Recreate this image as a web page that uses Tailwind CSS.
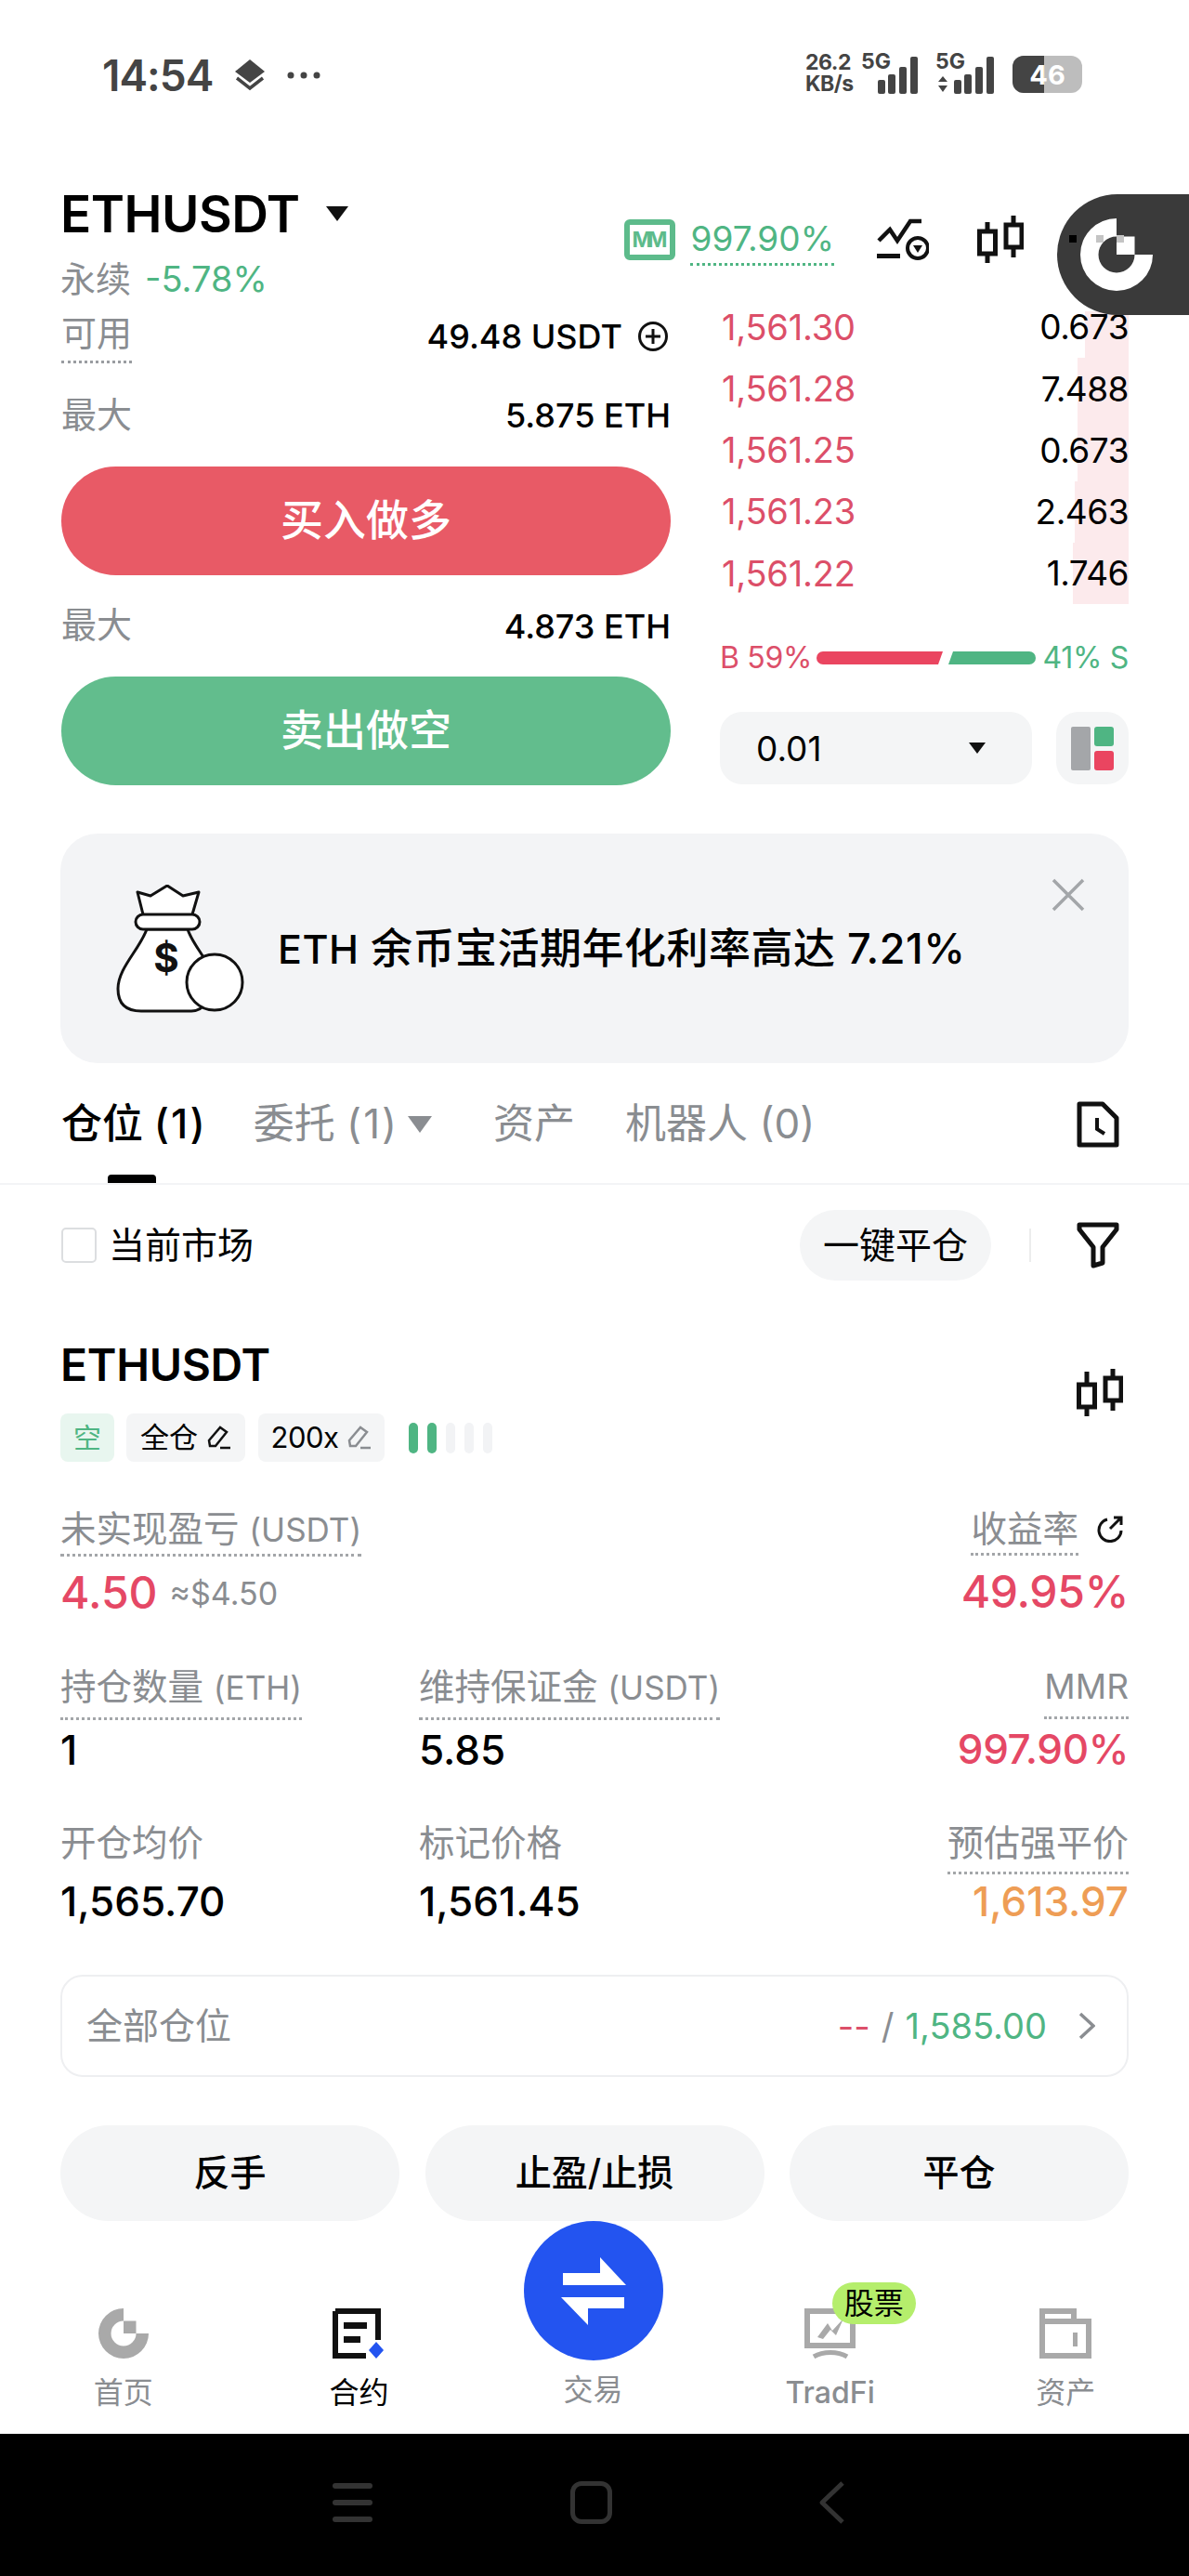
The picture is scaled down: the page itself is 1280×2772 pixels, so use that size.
<!DOCTYPE html>
<html lang="zh-CN">
<head>
    <meta charset="UTF-8">
    <meta name="viewport" content="width=device-width, initial-scale=1.0">
    <title>ETHUSDT</title>
    <script src="https://cdn.jsdelivr.net/npm/@tailwindcss/browser@4"></script>
</head>
<body class="bg-white">
<div class="relative w-[1280px] h-[2772px] overflow-hidden flex flex-col text-black font-['Inter','Noto_Sans_CJK_SC',sans-serif]">

    <!-- status bar -->
    <div class="h-[160px] shrink-0 flex items-start justify-between pl-[110px] pr-[115px] pt-[56px]">
        <div class="flex items-center h-[50px] text-[#444]">
            <span class="text-[46px] leading-[50px] font-semibold tracking-[-1px]">14:54</span>
            <svg class="ml-[24px] w-[32px] h-[34px]" viewBox="0 0 32 34"><path d="M16 0 32 13 16 25 0 13Z" fill="#444"/><path d="M2 20 16 31 30 20" fill="none" stroke="#444" stroke-width="3.5"/></svg>
            <svg class="ml-[24px] w-[36px] h-[8px]" viewBox="0 0 36 8"><circle cx="4" cy="4" r="3.5" fill="#444"/><circle cx="18" cy="4" r="3.5" fill="#444"/><circle cx="32" cy="4" r="3.5" fill="#444"/></svg>
        </div>
        <div class="flex items-start text-[#444]">
            <div class="flex flex-col items-start font-bold text-[23px] leading-[23px] w-[56px] tracking-[-0.5px]"><span>26.2</span><span>KB/s</span></div>
            <div class="relative ml-[4px] w-[68px] h-[46px]">
                <span class="absolute left-0 top-0 text-[23px] leading-[20px] font-bold">5G</span>
                <svg class="w-[68px] h-[46px]" viewBox="0 0 68 46"><rect x="18" y="30" width="8" height="15" rx="2" fill="#444"/><rect x="29" y="24" width="8" height="21" rx="2" fill="#444"/><rect x="41" y="16" width="8" height="29" rx="2" fill="#444"/><rect x="53" y="5" width="8" height="40" rx="2" fill="#444"/></svg>
            </div>
            <div class="relative ml-[12px] w-[70px] h-[46px]">
                <span class="absolute left-0 top-0 text-[23px] leading-[20px] font-bold">5G</span>
                <svg class="w-[70px] h-[46px]" viewBox="0 0 70 46"><path d="M3 32 8 26 13 32ZM3 36 8 43 13 36Z" fill="#444"/><rect x="20" y="30" width="8" height="15" rx="2" fill="#444"/><rect x="31" y="24" width="8" height="21" rx="2" fill="#444"/><rect x="43" y="16" width="8" height="29" rx="2" fill="#444"/><rect x="55" y="5" width="8" height="40" rx="2" fill="#444"/></svg>
            </div>
            <div class="relative ml-[13px] mt-[4px] w-[75px] h-[40px] rounded-[12px] bg-[#bdbdbd] overflow-hidden flex items-center justify-center">
                <div class="absolute left-0 top-0 h-full w-[34px] bg-[#444]"></div>
                <span class="relative text-[29px] font-bold text-white leading-none">46</span>
            </div>
        </div>
    </div>

    <!-- header -->
    <div class="h-[170px] shrink-0 flex justify-between pl-[65px]">
        <div class="flex flex-col">
            <div class="flex items-center h-[50px] mt-[45px]">
                <span class="text-[55px] leading-[50px] font-semibold tracking-[-0.5px]">ETHUSDT</span>
                <svg class="ml-[28px] w-[24px] h-[16px]" viewBox="0 0 24 16"><path d="M0 0H24L12 16Z" fill="#111"/></svg>
            </div>
            <div class="flex items-center mt-[23px] h-[44px]">
                <span class="text-[38px] text-[#8a8d91]">永续</span>
                <span class="ml-[15px] text-[38px] text-[#4fb583]">-5.78%</span>
            </div>
        </div>
        <div class="flex items-center h-[54px] mt-[71px] pr-[178px]">
            <svg class="w-[55px] h-[44px]" viewBox="0 0 55 44"><rect x="3" y="3" width="49" height="38" rx="3" fill="none" stroke="#5dbb8b" stroke-width="6"/><text x="27.500" y="30" text-anchor="middle" font-size="23" font-weight="700" fill="#5dbb8b" textLength="38">MM</text></svg>
            <span class="ml-[16px] text-[37px] leading-[52px] text-[#4fb583] border-b-[3px] border-dotted border-[#4fb583]">997.90%</span>
            <svg class="ml-[46px] w-[56px] h-[46px]" viewBox="0 0 56 46"><path d="M2 24 14 12 22 24 36 3H48" fill="none" stroke="#111" stroke-width="4.500"/><rect x="0" y="38" width="25" height="5" fill="#111"/><circle cx="44" cy="32" r="11" fill="none" stroke="#111" stroke-width="4"/><path d="M39 29H49L44 37Z" fill="#111"/></svg>
            <svg class="ml-[52px] w-[50px] h-[54px]" viewBox="0 0 50 54"><path d="M11 8V52M39 1V46" stroke="#111" stroke-width="5"/><rect x="2.500" y="18" width="17" height="24" fill="#fff" stroke="#111" stroke-width="5"/><rect x="31" y="11" width="17" height="24" fill="#fff" stroke="#111" stroke-width="5"/></svg>
        </div>
    </div>

    <!-- trade panel -->
    <div class="shrink-0 h-[515px] flex pl-[66px] pr-[65px]">
        <div class="w-[656px] shrink-0 flex flex-col">
            <div class="h-[62px] flex items-start justify-between">
                <span class="text-[38px] leading-[47px] h-[61px] pt-[5px] text-[#8a8d91] border-b-[3px] border-dotted border-[#9a9da1] box-border">可用</span>
                <div class="flex items-center h-[64px] pr-[2px]">
                    <span class="text-[36px] font-medium">49.48 USDT</span>
                    <svg class="ml-[16px] w-[34px] h-[34px]" viewBox="0 0 34 34"><circle cx="17" cy="17" r="14.500" fill="none" stroke="#111" stroke-width="3"/><path d="M17 9V25M9 17H25" stroke="#111" stroke-width="3"/></svg>
                </div>
            </div>
            <div class="h-[110px] flex items-center justify-between">
                <span class="text-[38px] mt-[-2px] text-[#8a8d91]">最大</span>
                <span class="text-[36px] font-medium">5.875 ETH</span>
            </div>
            <div class="h-[117px] rounded-full bg-[#e85a66] flex items-center justify-center text-white text-[46px] font-medium pb-[2px]">买入做多</div>
            <div class="h-[109px] flex items-center justify-between">
                <span class="text-[38px] mt-[-2px] text-[#8a8d91]">最大</span>
                <span class="text-[36px] font-medium">4.873 ETH</span>
            </div>
            <div class="h-[117px] rounded-full bg-[#62bd8d] flex items-center justify-center text-white text-[46px] font-medium pb-[2px]">卖出做空</div>
        </div>
        <div class="ml-[53px] flex-1 flex flex-col mt-[-11px]">
            <div class="relative h-[66.25px] flex items-center justify-between"><div class="absolute right-0 top-[16px] bottom-0 w-[47px] bg-[#fceaec]"></div><span class="relative pl-[2px] text-[38px] text-[#dc4f69] tracking-[-0.2px]">1,561.30</span><span class="relative text-[37px] tracking-[-0.5px]">0.673</span></div>
            <div class="relative h-[66.25px] flex items-center justify-between"><div class="absolute right-0 top-0 bottom-0 w-[55px] bg-[#fceaec]"></div><span class="relative pl-[2px] text-[38px] text-[#dc4f69] tracking-[-0.2px]">1,561.28</span><span class="relative text-[37px] tracking-[-0.5px]">7.488</span></div>
            <div class="relative h-[66.25px] flex items-center justify-between"><div class="absolute right-0 top-0 bottom-0 w-[55px] bg-[#fceaec]"></div><span class="relative pl-[2px] text-[38px] text-[#dc4f69] tracking-[-0.2px]">1,561.25</span><span class="relative text-[37px] tracking-[-0.5px]">0.673</span></div>
            <div class="relative h-[66.25px] flex items-center justify-between"><div class="absolute right-0 top-0 bottom-0 w-[58px] bg-[#fceaec]"></div><span class="relative pl-[2px] text-[38px] text-[#dc4f69] tracking-[-0.2px]">1,561.23</span><span class="relative text-[37px] tracking-[-0.5px]">2.463</span></div>
            <div class="relative h-[66.25px] flex items-center justify-between"><div class="absolute right-0 top-0 bottom-0 w-[60px] bg-[#fceaec]"></div><span class="relative pl-[2px] text-[38px] text-[#dc4f69] tracking-[-0.2px]">1,561.22</span><span class="relative text-[37px] tracking-[-0.5px]">1.746</span></div>

            <div class="mt-[38px] h-[40px] flex items-center justify-between text-[32px] tracking-[-0.3px]">
                <span class="text-[#dc4f69]">B 59%</span>
                <svg class="w-[236px] h-[14px] mr-[2px]" viewBox="0 0 236 14"><path d="M7 0H136L131 14H7A7 7 0 0 1 7 0Z" fill="#ea4560"/><path d="M147 0H229A7 7 0 0 1 229 14H142Z" fill="#4fb583"/></svg>
                <span class="text-[#4fb583]">41% S</span>
            </div>
            <div class="mt-[38px] flex justify-between h-[78px]">
                <div class="w-[336px] rounded-[24px] bg-[#f4f5f6] flex items-center justify-between pl-[39px] pr-[50px]">
                    <span class="text-[37px]">0.01</span>
                    <svg class="w-[18px] h-[12px]" viewBox="0 0 18 12"><path d="M0 0H18L9 12Z" fill="#111"/></svg>
                </div>
                <div class="w-[78px] rounded-[24px] bg-[#f4f5f6] flex items-center justify-center">
                    <svg class="w-[46px] h-[47px]" viewBox="0 0 46 47"><rect width="21" height="47" rx="2" fill="#a4a6a9"/><rect x="25" width="21" height="21" rx="3" fill="#4fb583"/><rect x="25" y="26" width="21" height="21" rx="3" fill="#ea4560"/></svg>
                </div>
            </div>
        </div>
    </div>

    <!-- banner -->
    <div class="relative shrink-0 mt-[52px] mx-[65px] h-[247px] rounded-[40px] bg-[#f3f4f6] flex items-start pl-[59px] pt-[55px]">
        <svg class="w-[140px] h-[138px] shrink-0" viewBox="0 0 140 138">
            <path d="M30 32 24 8 38 12 56 1 73 12 90 8 83 32" fill="#fff" stroke="#111" stroke-width="3" stroke-linejoin="round"/>
            <path d="M34 48C26 70 3 90 3 112 3 130 14 136 28 136H82C96 136 106 120 106 100 100 80 84 66 78 48Z" fill="#fff" stroke="#111" stroke-width="3"/>
            <rect x="22" y="32" width="69" height="16" rx="8" fill="#fff" stroke="#111" stroke-width="3"/>
            <text x="55" y="94" text-anchor="middle" font-size="42" font-weight="700" fill="#111">$</text>
            <circle cx="107" cy="105" r="30" fill="#fff" stroke="#111" stroke-width="3"/>
        </svg>
        <span class="ml-[35px] mt-[43px] text-[45px] leading-[52px] font-medium tracking-[0.5px]"><span class="text-[43px]">ETH</span> 余币宝活期年化利率高达 7.21%</span>
        <svg class="absolute right-[47px] top-[48px] w-[36px] h-[36px]" viewBox="0 0 36 36"><path d="M2 2 34 34M34 2 2 34" stroke="#a3a6a9" stroke-width="3.500"/></svg>
    </div>

    <!-- tabs -->
    <div class="relative shrink-0 h-[131px] border-b-[2px] border-[#f3f4f6] flex items-start pl-[66px] pr-[75px] pt-[38px]">
        <span class="text-[44px] leading-[54px] font-medium">仓位 <span class="tracking-[2px]">(1)</span></span>
        <span class="ml-[50px] text-[44px] leading-[54px] text-[#8a8d91]">委托 <span class="tracking-[2px]">(1)</span></span>
        <svg class="ml-[10px] mt-[19px] w-[26px] h-[18px]" viewBox="0 0 26 18"><path d="M0 0H26L13 18Z" fill="#8a8d91"/></svg>
        <span class="ml-[66px] text-[44px] leading-[54px] text-[#8a8d91]">资产</span>
        <span class="ml-[54px] text-[44px] leading-[54px] text-[#8a8d91]">机器人 (0)</span>
        <svg class="ml-auto mt-[3px] w-[46px] h-[50px]" viewBox="0 0 46 50"><path d="M3 3H28L43 18V47H3Z" fill="none" stroke="#111" stroke-width="5" stroke-linejoin="round"/><path d="M22 18V30L30 35" fill="none" stroke="#111" stroke-width="4"/></svg>
        <div class="absolute left-[116px] bottom-0 w-[52px] h-[9px] bg-black rounded-t-[4px]"></div>
    </div>

    <!-- market filter -->
    <div class="shrink-0 h-[130px] flex items-center pl-[66px] pr-[75px]">
        <div class="w-[38px] h-[38px] rounded-[5px] border-[2px] border-[#dcdee0]"></div>
        <span class="ml-[13px] text-[39px]">当前市场</span>
        <div class="ml-auto w-[206px] h-[76px] rounded-full bg-[#f4f5f6] flex items-center justify-center text-[39px]">一键平仓</div>
        <div class="ml-[41px] w-[2px] h-[36px] bg-[#eceded]"></div>
        <svg class="ml-[49px] w-[46px] h-[50px]" viewBox="0 0 46 50"><path d="M3 3H43V8L28 27V44L18 47V27L3 8Z" fill="none" stroke="#111" stroke-width="5" stroke-linejoin="round"/></svg>
    </div>

    <!-- position -->
    <div class="shrink-0 px-[65px] flex flex-col">
        <div class="flex items-center justify-between mt-[45px]">
            <div class="flex flex-col">
                <span class="text-[48px] leading-[38px] font-semibold tracking-[-0.3px]">ETHUSDT</span>
                <div class="flex items-center mt-[33px] h-[52px]">
                    <span class="w-[58px] h-[52px] rounded-[8px] bg-[#e8f6ef] text-[#4fb583] text-[30px] flex items-center justify-center">空</span>
                    <span class="ml-[13px] w-[128px] h-[52px] rounded-[8px] bg-[#f4f5f6] text-[31px] flex items-center justify-center gap-[10px]">全仓
                        <svg class="w-[26px] h-[28px]" viewBox="0 0 26 28"><path d="M2 17 14 3 21 8 9 23H3Z" fill="none" stroke="#111" stroke-width="2.500"/><path d="M14 25H25" stroke="#111" stroke-width="2.500"/></svg>
                    </span>
                    <span class="ml-[14px] w-[136px] h-[52px] rounded-[8px] bg-[#f4f5f6] text-[31px] tracking-[-0.5px] flex items-center justify-center gap-[10px]">200x
                        <svg class="w-[26px] h-[28px]" viewBox="0 0 26 28"><path d="M2 17 14 3 21 8 9 23H3Z" fill="none" stroke="#8a8d91" stroke-width="2.500"/><path d="M14 25H25" stroke="#8a8d91" stroke-width="2.500"/></svg>
                    </span>
                    <div class="ml-[26px] flex gap-[10px]">
                        <div class="w-[10px] h-[33px] rounded-full bg-[#4fb583]"></div>
                        <div class="w-[10px] h-[33px] rounded-full bg-[#4fb583]"></div>
                        <div class="w-[10px] h-[33px] rounded-full bg-[#f2f3f5]"></div>
                        <div class="w-[10px] h-[33px] rounded-full bg-[#f2f3f5]"></div>
                        <div class="w-[10px] h-[33px] rounded-full bg-[#f2f3f5]"></div>
                    </div>
                </div>
            </div>
            <svg class="mr-[6px] mb-[26px] w-[50px] h-[54px]" viewBox="0 0 50 54"><path d="M11 4V52M39 1V46" stroke="#111" stroke-width="5"/><rect x="2.500" y="18" width="17" height="24" fill="#fff" stroke="#111" stroke-width="5"/><rect x="31" y="11" width="17" height="24" fill="#fff" stroke="#111" stroke-width="5"/></svg>
        </div>

        <!-- stats -->
        <div class="flex justify-between mt-[50px]">
            <div class="flex flex-col items-start">
                <span class="text-[38.5px] leading-[44px] pb-[4px] text-[#8a8d91] border-b-[3px] border-dotted border-[#a3a6a9]">未实现盈亏 <span class="text-[35px]">(USDT)</span></span>
                <div class="h-[78px] flex items-center"><span class="text-[48px] font-medium text-[#e54865]">4.50</span><span class="ml-[13px] text-[34px] text-[#8a8d91]">≈$4.50</span></div>
            </div>
            <div class="flex flex-col items-end">
                <div class="flex items-start">
                    <span class="text-[38.5px] leading-[44px] pb-[4px] text-[#8a8d91] border-b-[3px] border-dotted border-[#a3a6a9]">收益率</span>
                    <svg class="ml-[19px] mt-[7px] mr-[5px] w-[30px] h-[30px]" viewBox="0 0 30 30"><path d="M12 5A12 12 0 1 0 27 17" fill="none" stroke="#111" stroke-width="3"/><path d="M15 15 27 3M19 3H27V11" fill="none" stroke="#111" stroke-width="3"/></svg>
                </div>
                <div class="h-[78px] flex items-center"><span class="text-[48px] font-medium text-[#e54865] tracking-[-0.3px]">49.95%</span></div>
            </div>
        </div>
        <div class="flex mt-[40px]">
            <div class="w-[386px] flex flex-col items-start">
                <span class="text-[38.5px] leading-[44px] pb-[10px] text-[#8a8d91] border-b-[3px] border-dotted border-[#a3a6a9]">持仓数量 <span class="text-[35px]">(ETH)</span></span>
                <div class="h-[64px] flex items-center text-[44px] font-medium">1</div>
            </div>
            <div class="flex flex-col items-start">
                <span class="text-[38.5px] leading-[44px] pb-[10px] text-[#8a8d91] border-b-[3px] border-dotted border-[#a3a6a9]">维持保证金 <span class="text-[35px]">(USDT)</span></span>
                <div class="h-[64px] flex items-center text-[44px] font-medium">5.85</div>
            </div>
            <div class="ml-auto flex flex-col items-end">
                <span class="text-[37px] leading-[44px] pb-[10px] text-[#8a8d91] border-b-[3px] border-dotted border-[#a3a6a9]">MMR</span>
                <div class="h-[64px] flex items-center text-[44px] font-medium text-[#e54865] tracking-[-0.4px]">997.90%</div>
            </div>
        </div>
        <div class="flex mt-[46px]">
            <div class="w-[386px] flex flex-col items-start">
                <span class="text-[38.5px] leading-[44px] pb-[12px] text-[#8a8d91]">开仓均价</span>
                <div class="h-[58px] flex items-center text-[44px] font-medium">1,565.70</div>
            </div>
            <div class="flex flex-col items-start">
                <span class="text-[38.5px] leading-[44px] pb-[12px] text-[#8a8d91]">标记价格</span>
                <div class="h-[58px] flex items-center text-[44px] font-medium">1,561.45</div>
            </div>
            <div class="ml-auto flex flex-col items-end">
                <span class="text-[39px] leading-[44px] pb-[9px] text-[#8a8d91] border-b-[3px] border-dotted border-[#a3a6a9]">预估强平价</span>
                <div class="h-[58px] flex items-center text-[44px] font-medium text-[#ee9d55]">1,613.97</div>
            </div>
        </div>

        <!-- all positions -->
        <div class="mt-[50px] h-[110px] rounded-[24px] border-[2px] border-[#eeeff1] flex items-center pl-[26px] pr-[34px]">
            <span class="text-[39px] text-[#8a8d91]">全部仓位</span>
            <span class="ml-auto text-[38px] text-[#dc4f69]">--</span>
            <span class="ml-[12px] text-[38px] text-[#8a8d91]">/</span>
            <span class="ml-[12px] text-[38px] text-[#4fb583]">1,585.00</span>
            <svg class="ml-[34px] w-[18px] h-[30px]" viewBox="0 0 18 30"><path d="M2 2 16 15 2 28" fill="none" stroke="#8a8d91" stroke-width="3.500"/></svg>
        </div>

        <!-- actions -->
        <div class="mt-[52px] h-[103px] flex justify-between">
            <div class="w-[365px] rounded-full bg-[#f4f5f6] flex items-center justify-center text-[39px] font-medium">反手</div>
            <div class="w-[365px] rounded-full bg-[#f4f5f6] flex items-center justify-center text-[39px] font-medium">止盈/止损</div>
            <div class="w-[365px] rounded-full bg-[#f4f5f6] flex items-center justify-center text-[39px] font-medium">平仓</div>
        </div>
    </div>

    <!-- bottom nav -->
    <div class="relative shrink-0 h-[229px] grid grid-cols-5 px-[6px] pt-[94px]">
        <div class="flex flex-col items-center">
            <svg class="w-[56px] h-[54px]" viewBox="0 0 80 80"><path d="M40 0A40 40 0 1 0 80 40H60A20 20 0 1 1 40 20Z" fill="#a9a9a9"/><rect x="40" y="20" width="20" height="20" fill="#a9a9a9"/></svg>
            <span class="mt-[17px] text-[32px] leading-[40px] text-[#8a8d91]">首页</span>
        </div>
        <div class="flex flex-col items-center">
            <svg class="w-[56px] h-[54px]" viewBox="0 0 56 54"><path d="M3 3H49V34M36 51H3V3" fill="none" stroke="#111" stroke-width="6"/><rect x="12" y="15" width="25" height="7" fill="#111"/><rect x="12" y="30" width="18" height="7" fill="#111"/><path d="M47 36 55 45 47 54 39 45Z" fill="#2354f0"/></svg>
            <span class="mt-[17px] text-[32px] leading-[40px] text-black">合约</span>
        </div>
        <div class="flex flex-col items-center justify-end pb-[27px]">
            <span class="text-[32px] leading-[40px] text-[#8a8d91] mr-[3px]">交易</span>
        </div>
        <div class="relative flex flex-col items-center">
            <svg class="w-[56px] h-[54px]" viewBox="0 0 56 54"><path d="M3 3H52V40H3Z" fill="none" stroke="#a9a9a9" stroke-width="6"/><path d="M14 31 25 16 30 24 42 11 34 29 28 23 20 33Z" fill="#a9a9a9"/><path d="M10 52C20 46 36 46 46 52" fill="none" stroke="#a9a9a9" stroke-width="5"/></svg>
            <span class="mt-[17px] text-[32px] leading-[40px] text-[#8a8d91] font-medium">TradFi</span>
            <div class="absolute left-[129px] top-[-28px] w-[90px] h-[45px] rounded-full bg-[#b5ee6c] flex items-center justify-center text-[32px] text-black">股票</div>
        </div>
        <div class="flex flex-col items-center">
            <svg class="w-[56px] h-[54px]" viewBox="0 0 56 54"><path d="M3 51V3H37V14H53V51ZM3 14H37" fill="none" stroke="#a9a9a9" stroke-width="6"/><rect x="36" y="26" width="5" height="15" fill="#a9a9a9"/></svg>
            <span class="mt-[17px] text-[32px] leading-[40px] text-[#8a8d91]">资产</span>
        </div>
        <div class="absolute left-[564px] top-0 w-[150px] h-[150px] rounded-full bg-[#2354f0] flex items-center justify-center">
            <svg class="w-[70px] h-[73px]" viewBox="0 0 70 73"><path d="M2 17H42V0L70 30H2ZM0 43H68V55H29V73Z" fill="#fff"/></svg>
        </div>
    </div>

    <!-- android nav -->
    <div class="shrink-0 flex-1 bg-black flex items-center justify-center pr-[14px] pb-[6px]">
        <div class="flex flex-col gap-[12px]">
            <div class="w-[43px] h-[6px] rounded-full bg-[#333]"></div>
            <div class="w-[43px] h-[6px] rounded-full bg-[#333]"></div>
            <div class="w-[43px] h-[6px] rounded-full bg-[#333]"></div>
        </div>
        <div class="ml-[213px] w-[45px] h-[46px] rounded-[12px] border-[5px] border-[#333]"></div>
        <svg class="ml-[222px] w-[28px] h-[46px]" viewBox="0 0 28 46"><path d="M26 2 4 23 26 44" fill="none" stroke="#333" stroke-width="5" stroke-linejoin="round"/></svg>
    </div>

    <!-- floating logo button -->
    <div class="absolute left-[1138px] top-[209px] w-[150px] h-[130px] rounded-l-[65px] bg-[#3a3a3a] flex items-center pl-[25px]">
        <svg class="w-[78px] h-[78px]" viewBox="0 0 80 80"><path d="M40 0A40 40 0 1 0 80 40H60A20 20 0 1 1 40 20Z" fill="#fff"/><rect x="40" y="20" width="20" height="20" fill="#fff"/></svg>
        <div class="absolute left-[13px] top-[44px] w-[8px] h-[8px] bg-black"></div>
        <div class="absolute left-[42px] top-[44px] w-[8px] h-[8px] bg-[#c4c4c4]"></div>
        <div class="absolute left-[64px] top-[44px] w-[8px] h-[8px] bg-[#c4c4c4]"></div>
    </div>
</div>
</body>
</html>
